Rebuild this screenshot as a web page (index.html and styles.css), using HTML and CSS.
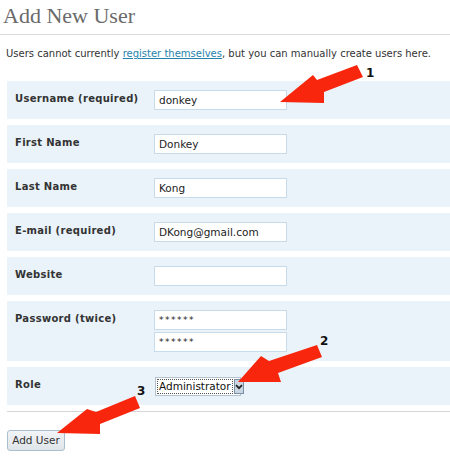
FILE: index.html
```html
<!DOCTYPE html>
<html>
<head>
<meta charset="utf-8">
<link rel="stylesheet" href="styles.css">
</head>
<body>
<div class="page">
  <h2 class="title">Add New User</h2>
  <p class="intro">Users cannot currently <a href="#">register themselves</a>, but you can manually create users here.</p>
  <div class="form">
    <div class="row">
      <div class="label">Username (required)</div>
      <div class="field"><div class="input">donkey</div></div>
    </div>
    <div class="row">
      <div class="label">First Name</div>
      <div class="field"><div class="input">Donkey</div></div>
    </div>
    <div class="row">
      <div class="label">Last Name</div>
      <div class="field"><div class="input">Kong</div></div>
    </div>
    <div class="row">
      <div class="label">E-mail (required)</div>
      <div class="field"><div class="input">DKong@gmail.com</div></div>
    </div>
    <div class="row">
      <div class="label">Website</div>
      <div class="field"><div class="input"></div></div>
    </div>
    <div class="row">
      <div class="label">Password (twice)</div>
      <div class="field pw"><div class="input stars">******</div><div class="input stars">******</div></div>
    </div>
    <div class="row">
      <div class="label">Role</div>
      <div class="field">
        <div class="select"><span class="sel-text">Administrator</span><span class="sel-btn"><svg width="8" height="6" viewBox="0 0 8 6"><path d="M1 1.2 L4 4.2 L7 1.2" fill="none" stroke="#222" stroke-width="1.8"/></svg></span></div>
      </div>
    </div>
  </div>
  <div class="submit"><span class="button">Add User</span></div>
</div>
<svg class="arrows" width="450" height="461" viewBox="0 0 450 461">
  <polygon fill="#f7260d" points="280,102 313,75 317,80 357,65 363,77 324,92 324,103"/>
  <polygon fill="#f7260d" points="238,382 261,356 269,361 317,345 322,357 278,373 281,382"/>
  <polygon fill="#f7260d" points="57,433 87,409 96,412 135,396 140,408 100,424 100,434"/>
  <text x="366" y="77" class="num">1</text>
  <text x="320" y="345" class="num">2</text>
  <text x="137" y="395" class="num">3</text>
</svg>
</body>
</html>
```
FILE: styles.css
```css
html, body {
  margin: 0;
  padding: 0;
  background: #fff;
}
body {
  width: 450px;
  height: 461px;
  overflow: hidden;
  position: relative;
  font-family: "DejaVu Sans", Verdana, sans-serif;
  color: #333;
}
.page {
  display: flex;
  flex-direction: column;
}
.title {
  margin: 0;
  padding: 2px 0 0 3px;
  height: 32px;
  font-family: "Liberation Serif", Georgia, serif;
  font-weight: normal;
  font-size: 22px;
  line-height: 28px;
  color: #6a6a6a;
  border-bottom: 1px solid #dadada;
}
.intro {
  margin: 0;
  padding: 12px 0 0 6px;
  font-size: 10px;
  line-height: 14px;
  color: #333;
}
.intro a {
  color: #2583ad;
  text-decoration: underline;
}
.form {
  margin: 20px 0 0 7px;
  display: flex;
  flex-direction: column;
  gap: 6px;
  padding-bottom: 6px;
  border-bottom: 1px solid #d6d6d6;
}
.row {
  display: flex;
  background: #eaf3fa;
  padding: 9px 0;
}
.label {
  width: 139px;
  padding-left: 8px;
  padding-top: 3px;
  font-size: 10px;
  font-weight: bold;
  line-height: 12px;
  letter-spacing: 0.3px;
  color: #333;
}
.field {
  display: flex;
  flex-direction: column;
  gap: 2px;
}
.input {
  box-sizing: border-box;
  width: 133px;
  height: 20px;
  background: #fff;
  border: 1px solid #c8dbea;
  padding: 0 4px;
  font-size: 10.5px;
  line-height: 18px;
  color: #222;
}
.stars {
  letter-spacing: 1.5px;
  font-size: 9px;
}
.select {
  display: flex;
  align-items: stretch;
  width: 86px;
  height: 19px;
  margin-left: 1px;
  margin-top: 1px;
  box-sizing: border-box;
  border: 1px solid #b4c2cf;
  background: #fff;
  padding: 1px;
}
.sel-text {
  flex: 1;
  border: 1px dotted #555;
  font-size: 10.5px;
  line-height: 13px;
  padding: 0 1px;
  color: #111;
  white-space: nowrap;
}
.sel-btn {
  width: 13px;
  margin-left: 1px;
  box-sizing: border-box;
  border: 1px solid #7c8ea3;
  background: #c9d6e4;
  display: flex;
  align-items: center;
  justify-content: center;
}
.submit {
  padding: 17px 0 0 7px;
}
.button {
  display: inline-block;
  box-sizing: border-box;
  width: 58px;
  height: 21px;
  border: 1px solid #a9bfcf;
  border-radius: 3px;
  background: linear-gradient(#f2f4f6, #dfe5ea);
  font-size: 10.5px;
  line-height: 19px;
  text-align: center;
  color: #333;
}
.arrows {
  position: absolute;
  left: 0;
  top: 0;
  pointer-events: none;
}
.num {
  font-family: "DejaVu Sans", Arial, sans-serif;
  font-weight: bold;
  font-size: 12px;
  fill: #111;
}
```
